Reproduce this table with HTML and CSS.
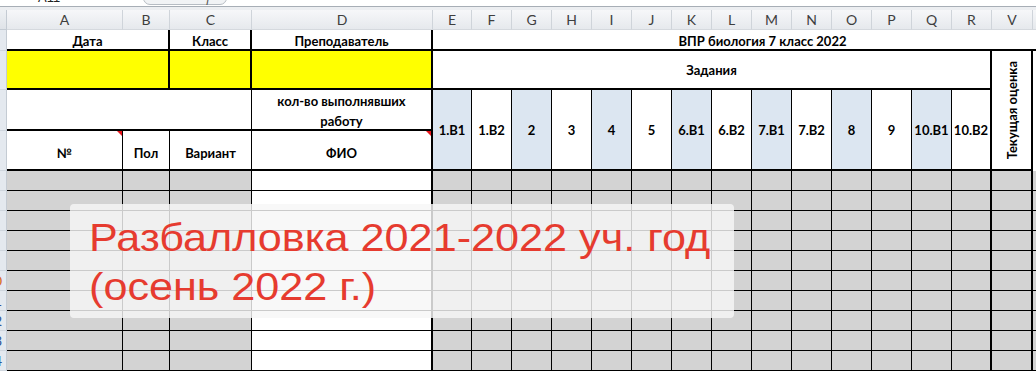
FILE: index.html
```html
<!DOCTYPE html>
<html lang="ru">
<head>
    <meta charset="UTF-8">
    <meta name="viewport" content="width=device-width, initial-scale=1.0">
    <title>ВПР биология 7 класс 2022</title>
    <link rel="stylesheet" href="styles.css">
</head>
<body>
    <div class="window">
        <div class="formula-bar">
            <div class="name-box">A11</div>
            <div class="fx-box"><span>ƒ</span></div>
        </div>
        <div class="bar-gap"></div>

        <div class="sheet" id="sheet">
            <!-- заголовки столбцов -->
            <div class="corner"></div>
            <div class="ch">A</div>
            <div class="ch">B</div>
            <div class="ch">C</div>
            <div class="ch">D</div>
            <div class="ch">E</div>
            <div class="ch">F</div>
            <div class="ch">G</div>
            <div class="ch">H</div>
            <div class="ch">I</div>
            <div class="ch">J</div>
            <div class="ch">K</div>
            <div class="ch">L</div>
            <div class="ch">M</div>
            <div class="ch">N</div>
            <div class="ch">O</div>
            <div class="ch">P</div>
            <div class="ch">Q</div>
            <div class="ch">R</div>
            <div class="ch">V</div>
            <div class="ch"></div>

            <!-- строка 1 -->
            <div class="rh"><span>1</span></div>
            <div class="c low span2 r2 b2">Дата</div>
            <div class="c low r2 b2">Класс</div>
            <div class="c low r2 b2">Преподаватель</div>
            <div class="c low span-rest b2">ВПР биология 7 класс 2022</div>

            <!-- строка 2 -->
            <div class="rh"><span>2</span></div>
            <div class="c yellow span2 r2 b2"></div>
            <div class="c yellow r2 b2"></div>
            <div class="c yellow r2 b2"></div>
            <div class="c span-tasks r2 b2">Задания</div>
            <div class="c grade r2 b2"><span>Текущая оценка</span></div>
            <div class="c tall"></div>

            <!-- строка 3 -->
            <div class="rh"><span>3</span></div>
            <div class="c span3 r1 b2"></div>
            <div class="c low r2 b2 two-lines">кол-во выполнявших<br>работу</div>
            <div class="c task blue r1 b2">1.В1</div>
            <div class="c task r1 b2">1.В2</div>
            <div class="c task blue r1 b2">2</div>
            <div class="c task r1 b2">3</div>
            <div class="c task blue r1 b2">4</div>
            <div class="c task r1 b2">5</div>
            <div class="c task blue r1 b2">6.В1</div>
            <div class="c task r1 b2">6.В2</div>
            <div class="c task blue r1 b2">7.В1</div>
            <div class="c task r1 b2">7.В2</div>
            <div class="c task blue r1 b2">8</div>
            <div class="c task r1 b2">9</div>
            <div class="c task blue r1 b2">10.В1</div>
            <div class="c task r2 b2">10.В2</div>

            <!-- строка 4 -->
            <div class="rh"><span>4</span></div>
            <div class="c lower note r1 b2">№</div>
            <div class="c lower r1 b2">Пол</div>
            <div class="c lower r1 b2">Вариант</div>
            <div class="c lower note r2 b2">ФИО</div>
        </div>

        <div class="caption"><span>Разбалловка 2021-2022 уч. год<br>(осень 2022 г.)</span></div>
    </div>

    <script>
        // пустые строки для учеников: A-C серые, D (ФИО) белая, E-V серые
        const sheet = document.getElementById('sheet');
        const rightBorders = ['r1', 'r1', 'r1', 'r2',
            'r1', 'r1', 'r1', 'r1', 'r1', 'r1', 'r1', 'r1', 'r1', 'r1', 'r1', 'r1', 'r1', 'r2',
            'r2', ''];

        for (let row = 5; row <= 14; row++) {
            const head = document.createElement('div');
            head.className = row === 10 ? 'rh active' : 'rh';
            head.innerHTML = '<span>' + row + '</span>';
            sheet.appendChild(head);

            rightBorders.forEach(function(border, i) {
                const cell = document.createElement('div');
                cell.className = 'c b1 ' + border + (i === 3 ? '' : ' gray');
                sheet.appendChild(cell);
            });
        }
    </script>
</body>
</html>
```

FILE: styles.css
```css
body {
    margin: 0;
    background: #fff;
    font-family: Lato, "Noto Sans", sans-serif;
}
.window {
    position: relative;
    width: 1036px;
    height: 372px;
    overflow: hidden;
}

/* остаток строки формул сверху */
.formula-bar {
    display: flex;
    height: 6px;
    border-bottom: 1px solid #a7aeb6;
    overflow: hidden;
}
.name-box {
    width: 143px;
    padding-left: 38px;
    box-sizing: border-box;
    margin-top: -9px;
    font: 13px/13px "Liberation Sans", sans-serif;
    color: #222;
}
.fx-box {
    width: 84px;
    height: 14px;
    margin-top: -9px;
    box-sizing: border-box;
    border: 1px solid #b6bcc3;
    border-radius: 7px;
    background: #f1f3f5;
    text-align: right;
    padding-right: 14px;
    font: 12px/12px "Liberation Sans", sans-serif;
    color: #555;
}
.bar-gap {
    height: 3px;
    background: #eceef1;
}

/* сетка листа */
.sheet {
    display: grid;
    grid-template-columns: 7px 116px 47px 82px 181px 39px repeat(13, 40px) 41px 59px;
    grid-template-rows: 20px 21px 39px 41px 40px repeat(10, 20px);
    width: 1092px;
}
.corner {
    background: linear-gradient(#eef1f4, #dfe3e8);
    border-right: 1px solid #c4cbd3;
    border-bottom: 1px solid #c4cbd3;
    box-sizing: border-box;
}
.ch {
    display: flex;
    align-items: center;
    justify-content: center;
    box-sizing: border-box;
    border-right: 1px solid #cfd4da;
    border-bottom: 1px solid #d5d9de;
    background: linear-gradient(#f6f7f9, #e6e9ed);
    font-size: 14px;
    color: #3e3e3e;
}

/* видна только правая часть столбца с номерами строк */
.rh {
    display: flex;
    align-items: center;
    justify-content: flex-end;
    padding-right: 3px;
    overflow: hidden;
    box-sizing: border-box;
    border-right: 1px solid #c4cbd3;
    border-bottom: 1px solid #cfd6de;
    background: #e4e9ef;
    font-size: 14px;
    color: #2f5597;
}
.rh span {
    flex-shrink: 0;
    width: 18px;
    text-align: center;
}
.rh.active {
    color: #d8661a;
}

.c {
    position: relative;
    display: flex;
    align-items: center;
    justify-content: center;
    box-sizing: border-box;
    text-align: center;
    font-size: 13px;
    font-weight: bold;
    color: #000;
    background: #fff;
}
.r1 { border-right: 1px solid #000; }
.r2 { border-right: 2px solid #000; }
.b1 { border-bottom: 1px solid #000; }
.b2 { border-bottom: 2px solid #000; }

.low { padding-top: 3px; }
.lower { padding-top: 6px; }

.span2 { grid-column: span 2; }
.span3 { grid-column: span 3; }
.span-tasks { grid-column: span 14; }
.span-rest { grid-column: span 16; }
.tall { grid-row: span 3; }

.yellow { background: #ffff00; }
.gray { background: #d3d3d3; }
.blue { background: #dce6f1; }

.task {
    grid-row: span 2;
}
.two-lines {
    line-height: 20px;
}
.grade {
    grid-row: span 3;
}
.grade span {
    writing-mode: vertical-rl;
    transform: rotate(180deg);
}

/* красный уголок примечания */
.note::after {
    content: "";
    position: absolute;
    top: 0;
    right: 0;
    border-left: 5px solid transparent;
    border-top: 5px solid #e8141b;
}

/* подпись поверх таблицы */
.caption {
    position: absolute;
    left: 70px;
    top: 204px;
    width: 664px;
    height: 114px;
    box-sizing: border-box;
    padding: 9px 0 0 19px;
    border-radius: 4px;
    background: rgba(246, 246, 246, 0.82);
    font: 39px/49px "Liberation Sans", Arial, sans-serif;
    color: #e63b2f;
}
.caption span {
    display: inline-block;
    white-space: nowrap;
    transform: scaleX(1.107);
    transform-origin: left top;
}
```
